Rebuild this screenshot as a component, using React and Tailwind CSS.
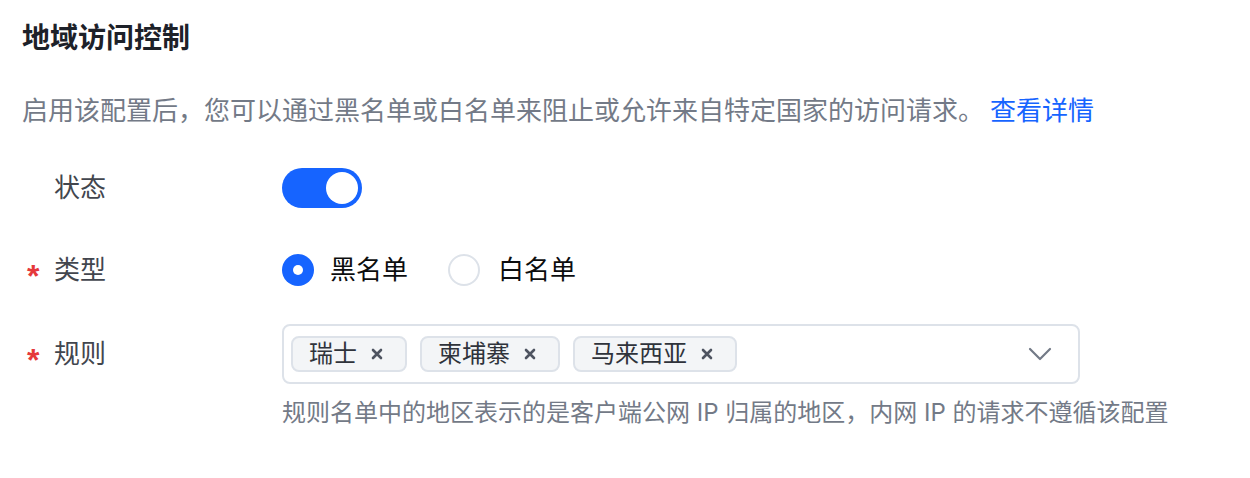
import React from "react";

const FONT = { fontFamily: "Inter, 'Noto Sans CJK SC', 'Noto Sans', sans-serif" };

function Label({ required, children }) {
  return (
    <div className="w-[260px] shrink-0 flex items-center h-full">
      <span
        className="w-[27px] ml-[5px] text-[32px] font-bold leading-none text-[#e5383b] translate-y-[6px]"
        style={{ fontFamily: "'Liberation Sans', Arial, sans-serif" }}
      >
        {required ? "*" : ""}
      </span>
      <span className="text-[26px] leading-[36px] text-[#42464e]">{children}</span>
    </div>
  );
}

function Tag({ children }) {
  return (
    <div className="h-[36px] flex items-center border-2 border-[#dde2e9] bg-[#f3f5f7] rounded-[8px] pl-[16px] pr-[22px]">
      <span className="text-[24px] leading-[32px] text-[#2f333b]">{children}</span>
      <svg className="ml-[14px]" width="12" height="12" viewBox="0 0 12 12">
        <path d="M2 2 L10 10 M10 2 L2 10" stroke="#4e5461" strokeWidth="2.6" strokeLinecap="round" />
      </svg>
    </div>
  );
}

export default function App() {
  return (
    <div className="w-[1250px] h-[478px] bg-white pl-[22px] pt-[18px]" style={FONT}>
      <h1 className="text-[28px] leading-[40px] font-semibold text-[#1d2129]">地域访问控制</h1>
      <p className="mt-[35px] text-[26px] leading-[36px] text-[#737a87]">
        启用该配置后，您可以通过黑名单或白名单来阻止或允许来自特定国家的访问请求。
        <span className="ml-[6px] text-[#1664ff]">查看详情</span>
      </p>

      <div className="mt-[39px] flex h-[40px] items-center">
        <Label>状态</Label>
        <div className="w-[80px] h-[40px] rounded-full bg-[#1664ff] flex items-center justify-end pr-[4px]">
          <div className="w-[32px] h-[32px] rounded-full bg-white" />
        </div>
      </div>

      <div className="mt-[42px] flex h-[40px] items-center">
        <Label required>类型</Label>
        <div className="flex items-center">
          <div className="w-[32px] h-[32px] rounded-full bg-[#1664ff] flex items-center justify-center">
            <div className="w-[10px] h-[10px] rounded-full bg-white" />
          </div>
          <span className="ml-[16px] text-[26px] leading-[36px] text-[#0c0d0e]">黑名单</span>
          <div className="ml-[40px] w-[32px] h-[32px] rounded-full border-2 border-[#dde2e9] bg-white" />
          <span className="ml-[18px] text-[26px] leading-[36px] text-[#0c0d0e]">白名单</span>
        </div>
      </div>

      <div className="mt-[34px] flex items-start">
        <div className="h-[60px] flex items-center">
          <Label required>规则</Label>
        </div>
        <div className="flex flex-col">
          <div className="w-[798px] h-[60px] border-2 border-[#dde2e9] rounded-[8px] flex items-center pl-[7px] pr-[26px]">
            <div className="flex items-center gap-[13px] flex-1">
              <Tag>瑞士</Tag>
              <Tag>柬埔寨</Tag>
              <Tag>马来西亚</Tag>
            </div>
            <svg width="24" height="14" viewBox="0 0 24 14">
              <path d="M2 2 L12 12 L22 2" fill="none" stroke="#737a87" strokeWidth="2.2" strokeLinecap="round" strokeLinejoin="round" />
            </svg>
          </div>
          <p className="mt-[11px] text-[24px] leading-[36px] text-[#737a87]">
            规则名单中的地区表示的是客户端公网 IP 归属的地区，内网 IP 的请求不遵循该配置
          </p>
        </div>
      </div>
    </div>
  );
}
